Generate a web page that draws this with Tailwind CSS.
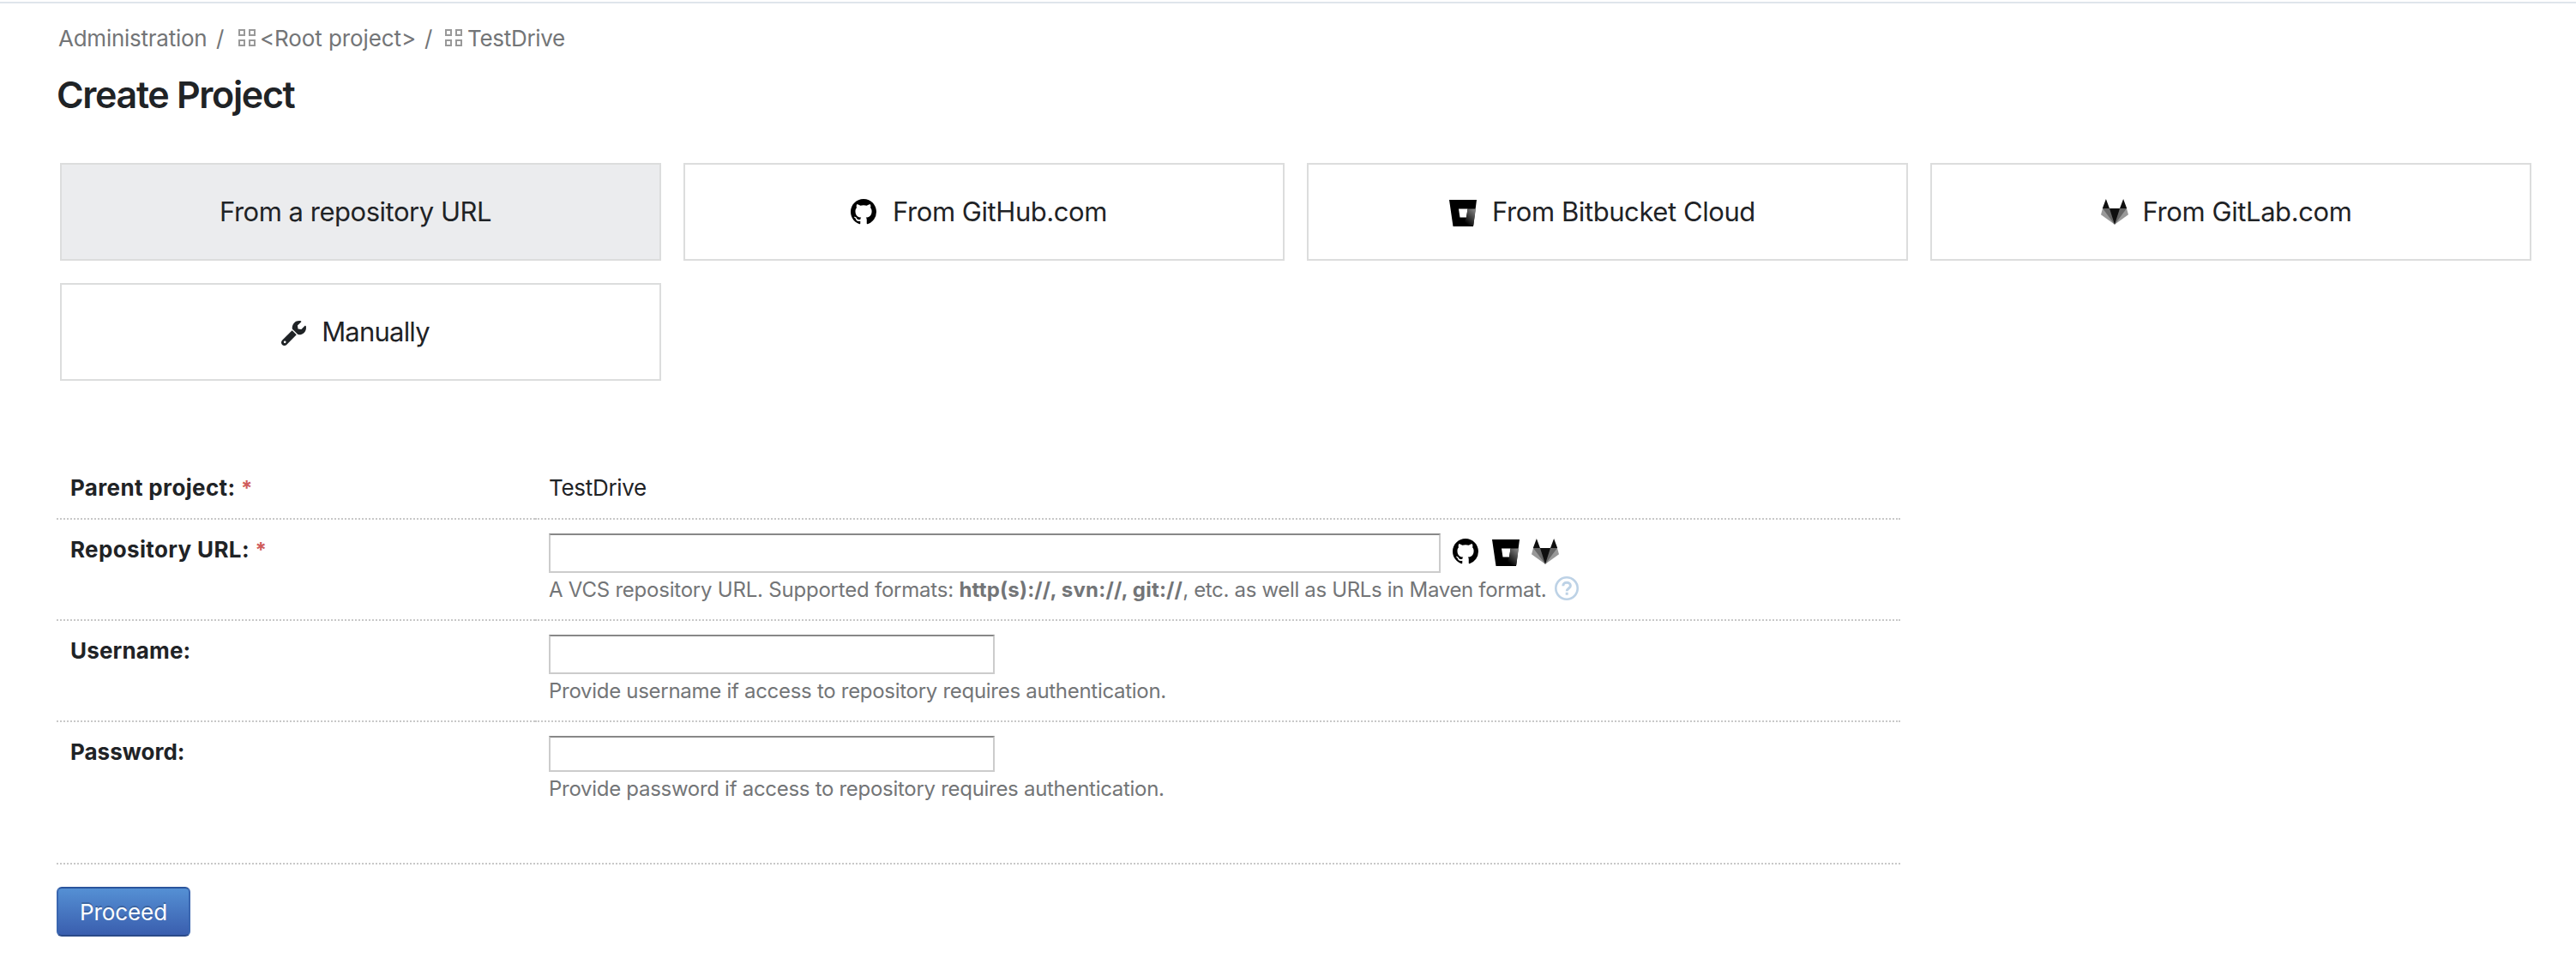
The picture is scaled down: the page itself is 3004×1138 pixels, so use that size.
<!DOCTYPE html>
<html lang="en">
<head>
<meta charset="utf-8">
<title>Create Project</title>
<script src="https://cdn.jsdelivr.net/npm/@tailwindcss/browser@4"></script>
</head>
<body class="bg-white font-['Inter',sans-serif] text-[#1f2326]">
<svg class="absolute w-0 h-0">
  <defs>
    <linearGradient id="bbg" gradientUnits="userSpaceOnUse" x1="32" y1="9" x2="17" y2="25">
      <stop offset="0" stop-color="#999"/><stop offset="1" stop-color="#000"/>
    </linearGradient>
  </defs>
  <symbol id="github" viewBox="0 0 16 16"><path d="M8 0C3.58 0 0 3.58 0 8c0 3.54 2.29 6.53 5.47 7.59.4.07.55-.17.55-.38 0-.19-.01-.82-.01-1.49-2.01.37-2.53-.49-2.69-.94-.09-.23-.48-.94-.82-1.13-.28-.15-.68-.52-.01-.53.63-.01 1.08.58 1.23.82.72 1.21 1.87.87 2.33.66.07-.52.28-.87.51-1.07-1.78-.2-3.64-.89-3.64-3.95 0-.87.31-1.59.82-2.15-.08-.2-.36-1.02.08-2.12 0 0 .67-.21 2.2.82.64-.18 1.32-.27 2-.27.68 0 1.36.09 2 .27 1.53-1.04 2.2-.82 2.2-.82.44 1.1.16 1.92.08 2.12.51.56.82 1.27.82 2.15 0 3.07-1.87 3.75-3.65 3.95.29.25.54.73.54 1.48 0 1.07-.01 1.93-.01 2.2 0 .21.15.46.55.38A8.012 8.012 0 0016 8c0-4.42-3.58-8-8-8z"/></symbol>
  <symbol id="gitlab" viewBox="0 0 32 30">
    <path fill="#999" d="M2 11 0 18.2 16 29.8 32 18.2 30 11z"/>
    <path fill="#666" d="M2 11h28L16 29.8z"/>
    <path fill="#0f0f0f" d="M10 11h12l-6 18.8zM5.9 0 10 11H1.8zM26.1 0l4.1 11H22z"/>
  </symbol>
  <symbol id="grid4" viewBox="0 0 20 20"><path fill="none" stroke="#999" stroke-width="2" d="M1 1h6v6H1zM13 1h6v6h-6zM1 13h6v6H1zM13 13h6v6h-6z"/></symbol>
</svg>

<div class="h-1 border-b-2 border-[#dfe5eb]"></div>
<div class="pl-[66px] pr-[52px]">
  <nav class="flex h-8 items-center mt-[25px] pl-[2px] text-[26px] leading-8 text-[#737577]">
    <span class="w-[184px] tracking-[-0.25px]">Administration</span>
    <span class="w-[26px]">/</span>
    <svg class="w-5 h-5 -mt-[2px] mr-[5px]"><use href="#grid4"/></svg>
    <span class="w-[192px] tracking-[-0.1px]">&lt;Root project&gt;</span>
    <span class="w-6">/</span>
    <svg class="w-5 h-5 -mt-[2px] mr-[6px]"><use href="#grid4"/></svg>
    <span class="tracking-[-0.3px]">TestDrive</span>
  </nav>
  <h1 class="mt-[23px] text-[43px] leading-[52px] font-semibold tracking-[-1.35px]">Create Project</h1>

  <div class="grid grid-cols-4 gap-[26px] mt-[54px] pl-1 text-[31px] leading-10">
    <div class="flex h-[114px] items-center justify-center border-2 border-[#dcdddd] bg-[#ebecee] pr-[12px] tracking-[-0.48px]">From a repository URL</div>
    <div class="flex h-[114px] items-center justify-center border-2 border-[#dcdddd] pr-3 tracking-[-0.45px]">
      <svg class="w-[30px] h-[30px] mr-[19px]"><use href="#github"/></svg>From GitHub.com
    </div>
    <div class="flex h-[114px] items-center justify-center border-2 border-[#dcdddd] pr-3 tracking-[-0.42px]">
      <svg class="w-8 h-[31px] mt-[3px] mr-[18px]" viewBox="0 0 32 31"><path fill-rule="evenodd" d="M0 0h32l-4 31H4.500zM11 10.500l1.500 10h7.500l1.500-10z"/><path fill="url(#bbg)" d="M21.500 10.500H31L28.200 30H16l4-9.500z"/></svg>From Bitbucket Cloud
    </div>
    <div class="flex h-[114px] items-center justify-center border-2 border-[#dcdddd] pr-[11px] tracking-[-0.42px]">
      <svg class="w-8 h-[30px] mr-[17px]"><use href="#gitlab"/></svg>From GitLab.com
    </div>
    <div class="flex h-[114px] items-center justify-center border-2 border-[#dcdddd] pr-[12px] tracking-[-0.8px]">
      <svg class="w-[29px] h-[29px] mt-[2px] mr-[18px]" viewBox="0 0 512 512"><path fill="#1f2326" d="M507.700 109.100c-2.200-9-13.500-12.100-20.100-5.500l-74.400 74.400-67.900-11.300L334 98.900l74.400-74.400c6.600-6.600 3.400-17.900-5.700-20.200-47.400-11.700-99.600.9-136.600 37.900-39.600 39.600-50.500 97.100-34.100 147.200L18.700 402.800c-25 25-25 65.500 0 90.500s65.500 25 90.500 0l213.200-213.200c50.100 16.700 107.500 5.700 147.400-34.200 37.100-37.100 49.700-89.300 37.900-136.800z"/><circle fill="#fff" cx="74" cy="438" r="24"/><path stroke="#fff" stroke-width="22" d="M222 180 334 292"/></svg>Manually
    </div>
  </div>

  <div class="mt-[88px] w-[2150px] text-[26px] leading-8">
    <div class="flex h-[74px]">
      <div class="w-[558px] border-b-2 border-dotted border-[#c8c8c8] pl-4 pt-[21px] font-bold tracking-[0.35px]">Parent project: <span class="text-[24px] text-[#cf5c5c]">*</span></div>
      <div class="flex-1 border-b-2 border-dotted border-[#c8c8c8] pl-4 pt-[21px] tracking-[-0.3px]">TestDrive</div>
    </div>
    <div class="flex h-[118px]">
      <div class="w-[558px] border-b-2 border-dotted border-[#c8c8c8] pl-4 pt-[19px] font-bold tracking-[0.35px]">Repository URL: <span class="text-[24px] text-[#cf5c5c]">*</span></div>
      <div class="flex-1 border-b-2 border-dotted border-[#c8c8c8] pl-4 pt-4">
        <div class="flex h-[46px]">
          <input class="w-[1040px] h-[46px] border-2 border-[#ccc] border-t-[#888]">
          <svg class="w-[30px] h-[30px] mt-[6px] ml-[14px]"><use href="#github"/></svg>
          <svg class="w-8 h-[31px] mt-[7px] ml-4" viewBox="0 0 32 31"><path fill-rule="evenodd" d="M0 0h32l-4 31H4.500zM11 10.500l1.500 10h7.500l1.500-10z"/><path fill="url(#bbg)" d="M21.500 10.500H31L28.200 30H16l4-9.500z"/></svg>
          <svg class="w-8 h-[30px] mt-[6px] ml-[14px]"><use href="#gitlab"/></svg>
        </div>
        <div class="flex mt-[6px] text-[24px] leading-7 text-[#737577]">
          <span class="tracking-[-0.22px]">A VCS repository URL. Supported formats: <b class="tracking-[0.2px]">http(s)://, svn://, git://</b><span class="tracking-[-0.33px]">, etc. as well as URLs in Maven format.</span></span>
          <svg class="w-7 h-7 -mt-[2px] ml-[10px]" viewBox="0 0 28 28" fill="none" stroke="#bdd2e6"><circle cx="14" cy="14" r="12.700" stroke-width="2.600"/><path stroke-width="3" d="M9.800 11.200c0-5.300 8.600-5.200 8.600-.2 0 3-4.200 3-4.200 6.300M14.200 18.800v3"/></svg>
        </div>
      </div>
    </div>
    <div class="flex h-[118px]">
      <div class="w-[558px] border-b-2 border-dotted border-[#c8c8c8] pl-4 pt-[19px] font-bold tracking-[0.15px]">Username:</div>
      <div class="flex-1 border-b-2 border-dotted border-[#c8c8c8] pl-4 pt-4">
        <input class="block w-[520px] h-[46px] border-2 border-[#ccc] border-t-[#888]">
        <p class="mt-[6px] text-[24px] leading-7 tracking-[-0.29px] text-[#737577]">Provide username if access to repository requires authentication.</p>
      </div>
    </div>
    <div class="flex h-[166px] border-b-2 border-dotted border-[#c8c8c8]">
      <div class="w-[558px] pl-4 pt-[19px] font-bold">Password:</div>
      <div class="flex-1 pl-4 pt-4">
        <input type="password" class="block w-[520px] h-[42px] border-2 border-[#ccc] border-t-[#888]">
        <p class="mt-[6px] text-[24px] leading-7 tracking-[-0.29px] text-[#737577]">Provide password if access to repository requires authentication.</p>
      </div>
    </div>
  </div>
  <button class="mt-[26px] flex h-[58px] w-[156px] items-center justify-center rounded-[6px] border-2 border-x-[#3a66b0] border-t-[#2a549c] border-b-[#2a4a88] bg-linear-to-b from-[#5590d4] to-[#3a5eae] text-[26px] tracking-[-0.1px] text-white text-shadow-[0_-2px_0_rgb(0_0_0/0.2)]">Proceed</button>
</div>
</body>
</html>
